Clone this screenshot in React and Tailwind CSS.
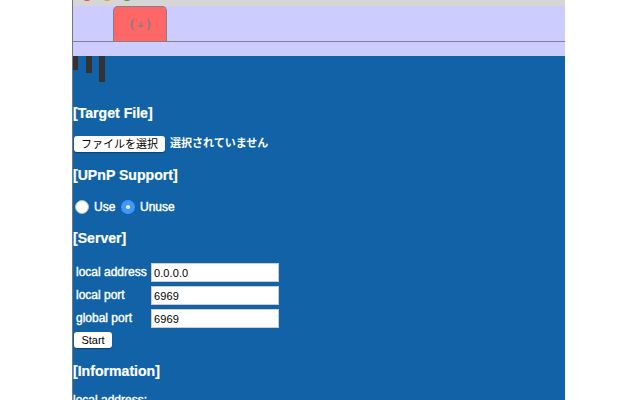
const fields = [
  ["local address", "0.0.0.0"],
  ["local port", "6969"],
  ["global port", "6969"],
];

function Heading({ children }) {
  return (
    <h3 className="h-5 text-[14.1px] leading-5 font-bold [-webkit-text-stroke:0.2px_white]">
      {children}
    </h3>
  );
}

function Radio({ checked }) {
  return (
    <span
      className={
        "flex size-3.5 items-center justify-center rounded-full " +
        (checked ? "bg-[#3c98fd]" : "border border-[#aebccb] bg-white")
      }
    >
      {checked && <span className="size-1 rounded-full bg-white" />}
    </span>
  );
}

export default function App() {
  return (
    <div className="h-[400px] w-[640px] overflow-hidden bg-white pl-[72px] font-['Liberation_Sans','Noto_Sans_CJK_JP',sans-serif]">
      <div className="flex h-[400px] w-[493px] flex-col overflow-hidden border-l border-[#777777] bg-[#1162a6] text-white">
        <div className="flex h-1.5 shrink-0 gap-2 overflow-hidden bg-[#d6d6d6] pl-2">
          <span className="-mt-[11px] size-3 rounded-full bg-[#e4484a]" />
          <span className="-mt-[11px] size-3 rounded-full bg-[#dfa023]" />
          <span className="-mt-[11px] size-3 rounded-full bg-[#1eac2b]" />
        </div>
        <div className="flex h-9 shrink-0 border-b border-[#857f8b] bg-[#ccccff] pl-10">
          <div className="flex h-[35px] w-[54px] items-center justify-center rounded-t-[5px] border border-b-0 border-[#857f8b] bg-[#ff6666] pt-px font-['DejaVu_Sans_Mono',monospace] text-[13px] font-bold text-[#88807f]">
            <span>(</span>
            <span className="flex w-[9px] items-center justify-center text-[10px]">+</span>
            <span>)</span>
          </div>
        </div>
        <div className="h-3.5 shrink-0 bg-[#ccccff]" />
        <div className="flex h-[47px] shrink-0 items-start">
          <span className="h-3.5 w-[5px] bg-[#333333]" />
          <span className="ml-2 h-[17px] w-1.5 bg-[#333333]" />
          <span className="ml-[7px] h-[26px] w-[6px] bg-[#333333]" />
        </div>
        <Heading>[Target File]</Heading>
        <div className="mt-[13px] flex h-4 shrink-0 items-center gap-[5px] pl-px text-[11px] leading-4">
          <button className="h-4 w-[91px] rounded-[3px] bg-white text-black shadow-[0_1px_1px_#0b4270]">
            ファイルを選択
          </button>
          <span className="pb-0.5 font-bold">選択されていません</span>
        </div>
        <div className="mt-[13px]">
          <Heading>[UPnP Support]</Heading>
        </div>
        <div className="mt-3 flex h-5 shrink-0 items-center pl-0.5 text-xs [-webkit-text-stroke:0.4px_white]">
          <Radio />
          <span className="ml-[5px] w-[27px]">Use</span>
          <Radio checked />
          <span className="ml-[5px]">Unuse</span>
        </div>
        <div className="mt-[11px]">
          <Heading>[Server]</Heading>
        </div>
        <div className="mt-[15px] flex shrink-0 flex-col gap-1 pl-[3px]">
          {fields.map(([label, value]) => (
            <label key={label} className="flex h-[19px] items-start text-xs">
              <span className="w-[75px] leading-[18px] [-webkit-text-stroke:0.4px_white]">{label}</span>
              <input
                readOnly
                defaultValue={value}
                className="h-[19px] w-32 border border-[#cccccc] bg-white px-0.5 pt-px text-[11px] leading-4 tracking-[0.1px] text-black outline-none"
              />
            </label>
          ))}
        </div>
        <button className="mt-1 ml-px h-4 w-[38px] shrink-0 rounded-[3px] bg-white text-[11px] leading-4 text-black shadow-[0_1px_1px_#0b4270]">
          Start
        </button>
        <div className="mt-[13px] shrink-0">
          <Heading>[Information]</Heading>
        </div>
        <div className="mt-[11px] h-4 shrink-0 text-xs leading-4 [-webkit-text-stroke:0.4px_white]">
          local address:
        </div>
      </div>
    </div>
  );
}
